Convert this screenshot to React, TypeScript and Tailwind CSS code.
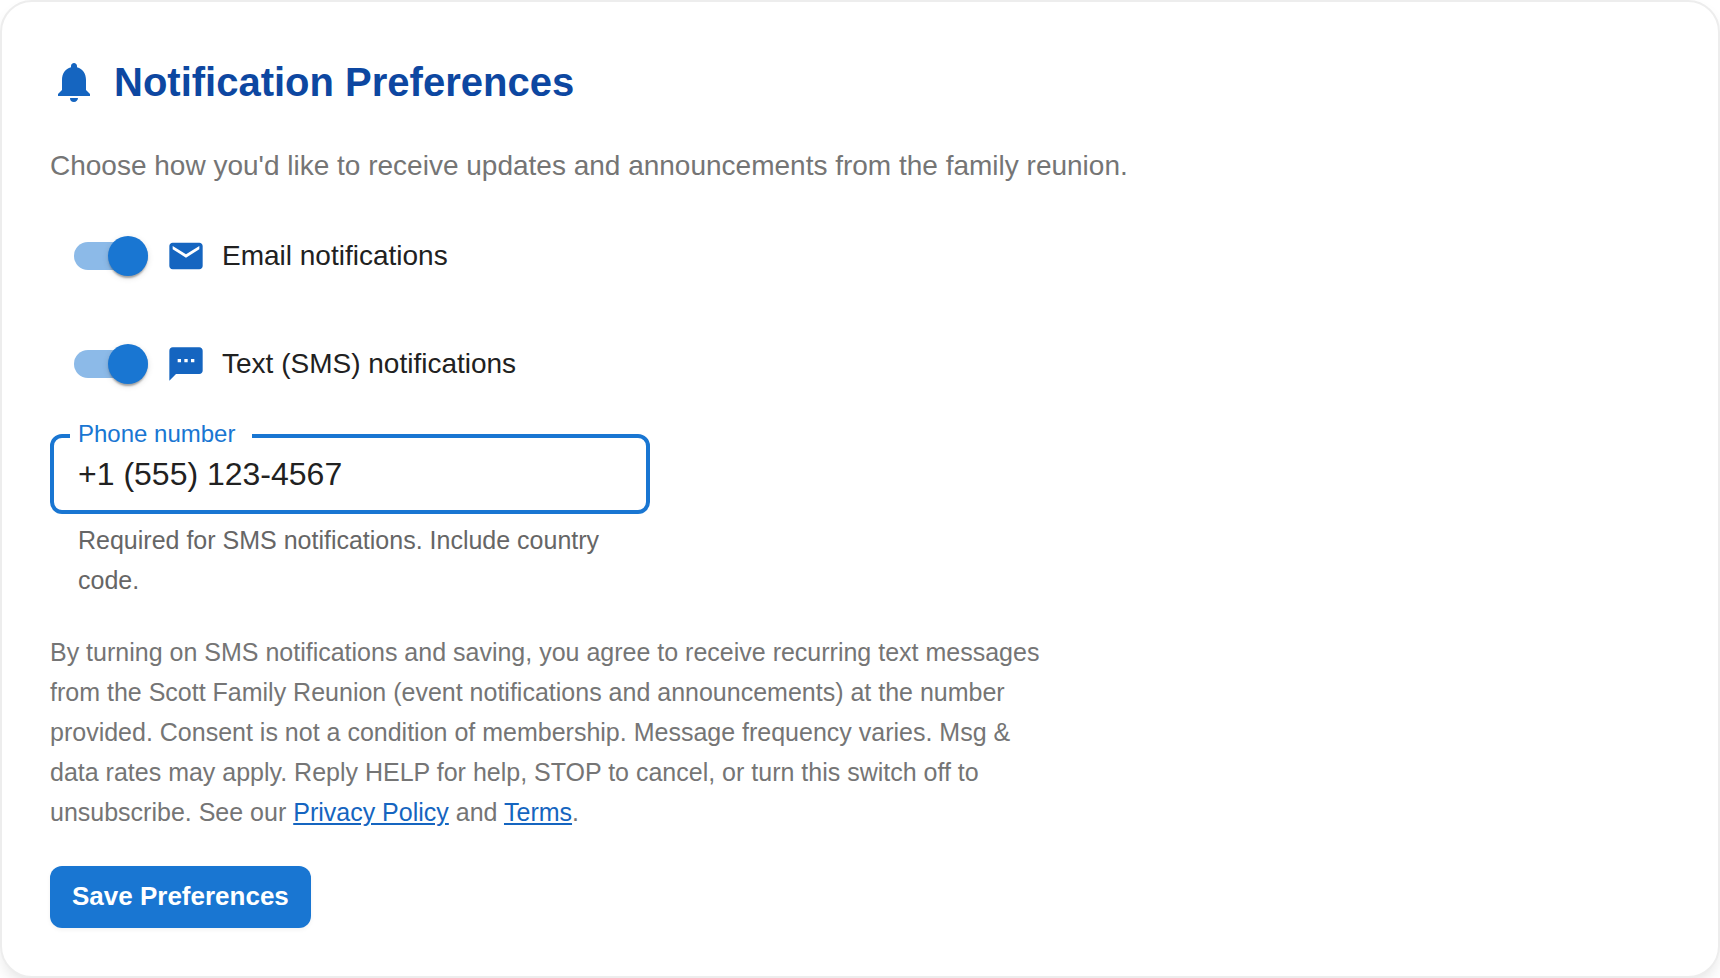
import * as React from "react";
import { MdEmail, MdNotifications, MdSms } from "react-icons/md";

type ToggleRowProps = {
  id: string;
  label: string;
  icon: React.ReactNode;
  checked: boolean;
  onChange: (next: boolean) => void;
};

function ToggleRow({ id, label, icon, checked, onChange }: ToggleRowProps) {
  return (
    <label htmlFor={id} className="relative flex h-[76px] w-fit cursor-pointer items-center">
      <input
        id={id}
        type="checkbox"
        role="switch"
        checked={checked}
        onChange={(e) => onChange(e.target.checked)}
        className="sr-only"
      />
      {/* track + thumb */}
      <span
        className={`ml-6 mr-[18px] flex h-7 w-[74px] items-center rounded-full ${
          checked ? "justify-end bg-[#8cbae8]" : "justify-start bg-[#9e9e9e]"
        }`}
      >
        <span
          className={`h-10 w-10 shrink-0 rounded-full shadow-[0_4px_2px_-2px_rgba(0,0,0,0.2),0_2px_2px_rgba(0,0,0,0.14),0_2px_6px_rgba(0,0,0,0.12)] ${
            checked ? "bg-[#1976d2]" : "bg-white"
          }`}
        />
      </span>
      <span className="flex items-center gap-4">
        <span className="text-[#1565c0]">{icon}</span>
        <span className="text-[28px] leading-[42px] text-[#212121]">{label}</span>
      </span>
    </label>
  );
}

export default function App() {
  const [email, setEmail] = React.useState(true);
  const [sms, setSms] = React.useState(true);
  const [phone, setPhone] = React.useState("+1 (555) 123-4567");

  return (
    <main className="bg-white font-['Liberation_Sans',Arial,sans-serif]">
      <form
        onSubmit={(e) => e.preventDefault()}
        className="flex flex-col items-start gap-8 rounded-[32px] border-2 border-[#ededed] bg-white p-12 shadow-[0_8px_16px_-4px_rgba(0,0,0,0.12)]"
      >
        <div className="flex items-center gap-4">
          <MdNotifications size={48} className="text-[#1565c0]" aria-hidden />
          <h1 className="text-[40px] font-bold leading-[64px] text-[#0d47a1]">Notification Preferences</h1>
        </div>

        <p className="text-[28px] leading-10 text-[#757575]">
          Choose how you&apos;d like to receive updates and announcements from the family reunion.
        </p>

        <ToggleRow
          id="email-notifications"
          label="Email notifications"
          icon={<MdEmail size={40} aria-hidden />}
          checked={email}
          onChange={setEmail}
        />
        <ToggleRow
          id="sms-notifications"
          label="Text (SMS) notifications"
          icon={<MdSms size={40} aria-hidden />}
          checked={sms}
          onChange={setSms}
        />

        <div className="w-full max-w-[600px]">
          <div className="relative">
            <input
              id="phone"
              type="tel"
              value={phone}
              onChange={(e) => setPhone(e.target.value)}
              aria-describedby="phone-help"
              className="block h-20 w-full rounded-xl border-4 border-[#1976d2] bg-white px-6 text-[32px] text-[#212121] outline-none"
            />
            {/* label sits in the notch of the outline */}
            <label htmlFor="phone" className="absolute -top-4 left-5 w-[182px] bg-white px-2 text-2xl leading-8 text-[#1976d2]">
              Phone number
            </label>
          </div>
          <p id="phone-help" className="mt-1.5 px-7 text-[25px] leading-10 text-[#666666]">
            Required for SMS notifications. Include country code.
          </p>
        </div>

        <p className="max-w-[1010px] pb-0.5 text-[25px] leading-10 text-[#757575]">
          By turning on SMS notifications and saving, you agree to receive recurring text messages from the Scott
          Family Reunion (event notifications and announcements) at the number provided. Consent is not a condition of
          membership. Message frequency varies. Msg &amp; data rates may apply. Reply HELP for help, STOP to cancel, or
          turn this switch off to unsubscribe. See our{" "}
          <a href="#privacy" className="text-[#1565c0] underline">
            Privacy Policy
          </a>{" "}
          and{" "}
          <a href="#terms" className="text-[#1565c0] underline">
            Terms
          </a>
          .
        </p>

        <button
          type="submit"
          className="rounded-xl bg-[#1976d2] px-[22px] pb-3.5 pt-3 text-[26px] font-bold leading-9 text-white shadow-[0_2px_4px_rgba(0,0,0,0.05)]"
        >
          Save Preferences
        </button>
      </form>
    </main>
  );
}
